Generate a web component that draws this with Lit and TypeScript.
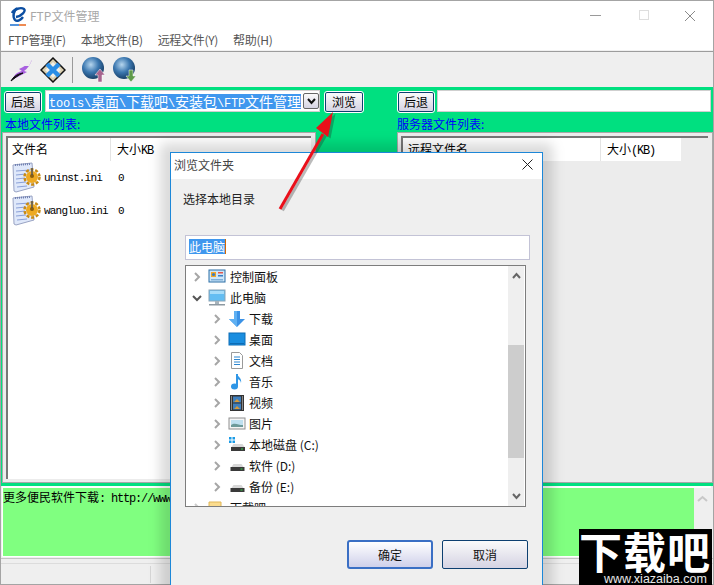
import { LitElement, html, css, svg } from "lit";
import { customElement } from "lit/decorators.js";

const chev = (open = false, light = false) =>
  html`<svg class="chev" width="10" height="10" viewBox="0 0 10 10"><path d=${open ? "M1 3l4 4 4-4" : "M3 1l4 4-4 4"} fill="none" stroke=${open ? "#555" : light ? "#ccc" : "#a6a6a6"} stroke-width="2"/></svg>`;

const icons: Record<string, any> = {
  panel: svg`<rect x="1" y="2" width="16" height="12" fill="#cfe6f8" stroke="#2b6ea6"/><rect x="3" y="4" width="5" height="5" fill="#f5a623"/><circle cx="5.5" cy="6.5" r="1.6" fill="#3a7fc4"/><rect x="10" y="4" width="5" height="1.5" fill="#e2574c"/><rect x="10" y="7" width="5" height="1.5" fill="#3a7fc4"/><rect x="3" y="11" width="12" height="1.5" fill="#7fb0da"/>`,
  pc: svg`<rect x="1" y="1" width="16" height="11" fill="#63bdf2" stroke="#8aa4b6"/><rect x="2" y="2" width="14" height="3" fill="#a6dcf9"/><rect x="7" y="12" width="4" height="3" fill="#a8b3bb"/><rect x="1" y="15" width="16" height="1.5" fill="#8d99a2"/>`,
  down: svg`<path d="M6 1h6v8h5l-8 8-8-8h5z" fill="#3b92e6"/><path d="M6 1h3v16l-8-8h5z" fill="#5fb0f2"/>`,
  desk: svg`<rect x="1" y="2" width="16" height="12" fill="#1a8ee0" stroke="#0d6cb5"/><rect x="2" y="12" width="14" height="1" fill="#0d6cb5"/>`,
  doc: svg`<path d="M3.500 .5h8l3 3v13h-11z" fill="#fff" stroke="#9a9a9a"/><path d="M6 5h6M6 7.500h6M6 10h6M6 12.500h6" stroke="#2f87d0" stroke-width="1"/>`,
  music: svg`<path d="M9 1v12" stroke="#2f96e6" stroke-width="2"/><ellipse cx="6.500" cy="13.500" rx="3.500" ry="3" fill="#2f96e6"/><path d="M9 1c1 3 5 4 4 9-.5-3-2.500-4-4-4z" fill="#2f96e6"/>`,
  video: svg`<rect x="2" y="1" width="14" height="16" fill="#333"/><rect x="5" y="2.500" width="8" height="6" fill="#3f7fbe"/><rect x="5" y="9.500" width="8" height="6" fill="#3f7fbe"/><path d="M6 8l3-3 3 3zM6 15l3-3 3 3z" fill="#d89a3a"/><path d="M3 3h1M3 5h1M3 7h1M3 9h1M3 11h1M3 13h1M3 15h1M14 3h1M14 5h1M14 7h1M14 9h1M14 11h1M14 13h1M14 15h1" stroke="#ddd"/>`,
  pic: svg`<rect x="1" y="3" width="16" height="11" fill="#f5f5f5" stroke="#8f8f8f"/><rect x="3" y="5" width="12" height="7" fill="#bfe0f0"/><path d="M3 10c4-3 7 0 12 0v2H3z" fill="#6d9a9a"/>`,
  c: svg`<path d="M1 1h2.500v2.500H1zM4.500 1H7v2.500H4.500zM1 4.500h2.500V7H1zM4.500 4.500H7V7H4.500z" fill="#1a9be6"/><path d="M3.500 11l2-3h9l2 3z" fill="#d8d8d8"/><rect x="3" y="11" width="14" height="4" fill="#3a3a3a"/><rect x="13" y="12.500" width="2" height="1" fill="#35d04a"/>`,
  d: svg`<path d="M3.500 10l2-3h8l2 3z" fill="#d8d8d8"/><rect x="2.500" y="10" width="14" height="4" fill="#3a3a3a"/><rect x="12.500" y="11.500" width="2" height="1" fill="#35d04a"/>`,
  folder: svg`<path d="M1 3h12v13H1z" fill="#fbdc8e" stroke="#e0b658"/>`,
};

const tree = [
  { t: "控制面板", i: "panel", d: 0 },
  { t: "此电脑", i: "pc", d: 0, open: true },
  { t: "下载", i: "down", d: 1 },
  { t: "桌面", i: "desk", d: 1 },
  { t: "文档", i: "doc", d: 1 },
  { t: "音乐", i: "music", d: 1 },
  { t: "视频", i: "video", d: 1 },
  { t: "图片", i: "pic", d: 1 },
  { t: "本地磁盘 (C:)", i: "c", d: 1 },
  { t: "软件 (D:)", i: "d", d: 1 },
  { t: "备份 (E:)", i: "d", d: 1 },
  { t: "下载吧", i: "folder", d: 0 },
];

const iniIcon = html`<svg class="ini" width="30" height="32" viewBox="0 0 30 32">
  <path d="M1 3l19-2 2 24-18 5-2-1z" fill="#dfe8fa" stroke="#9aa4c4"/>
  <path d="M4 9l14-1M4 13l10-1M4 17l9-1M4 21l10-1M5 25l10-1" stroke="#8aa0d8"/>
  <path d="M3 3l16-1" stroke="#6f7fb0" stroke-width="2" stroke-dasharray="1 1"/>
  <circle cx="20" cy="15" r="7.500" fill="none" stroke="#c98a12" stroke-width="2.500" stroke-dasharray="3 1.800"/>
  <circle cx="20" cy="15" r="6" fill="#eeaa22"/>
  <circle cx="20" cy="14" r="2" fill="#8a5e0c"/>
  <path d="M20 6v7" stroke="#555" stroke-width="1.500"/>
</svg>`;

@customElement("app-root")
export class AppRoot extends LitElement {
  static styles = css`
    :host { display: block; width: 714px; height: 585px; position: relative; overflow: hidden; background: #efefef; font-family: "Noto Sans CJK SC", sans-serif; color: #000; }
    .m { font-family: "Liberation Mono", monospace; font-size: 12px; letter-spacing: -1.2px; }
    .m7 { font-family: "Liberation Mono", monospace; font-size: 12px; letter-spacing: -.2px; }
    .win { width: 714px; height: 585px; box-sizing: border-box; display: flex; flex-direction: column; border: 1px solid #a4a4a4; }
    .title { height: 29px; background: #fff; display: flex; align-items: center; padding-left: 8px; flex: none; color: #a8a8a8; font-size: 12px; }
    .title span { margin-left: 3px; }
    .sp { flex: 1; }
    .wc { width: 46px; height: 29px; display: flex; align-items: center; justify-content: center; }
    .wc.mn { padding-right: 4px; box-sizing: border-box; }
    .menu { height: 21px; background: #fff; display: flex; gap: 15px; padding: 0 0 0 7px; font-size: 12px; letter-spacing: -.3px; color: #555; line-height: 20px; flex: none; border-bottom: 1px solid #9c9c9c; box-shadow: inset 0 -1px 0 #f0f0f0; }
    .tool { height: 35px; background: #efefef; display: flex; align-items: center; padding-left: 9px; flex: none; }
    .tool .sep { width: 1px; height: 26px; background: #9a9a9a; margin: 0 8px 0 6px; }
    .green { background: #00e080; height: 396px; flex: none; display: flex; flex-direction: column; }
    .bar { display: grid; grid-template-columns: 392px 1fr; height: 27px; padding-top: 3px; box-sizing: border-box; flex: none; }
    .bar > div { display: flex; align-items: flex-start; }
    .btn { box-sizing: border-box; height: 20px; margin-top: 2px; width: 36px; border: 1px solid #0d3f70; border-radius: 2px; background: linear-gradient(#fafafa, #d5d3e3); outline: 1px solid #fff; font-size: 12px; display: flex; align-items: center; justify-content: center; line-height: 1; }
    .left { padding-left: 4px; }
    .combo { margin-left: 4px; width: 275px; height: 22px; background: #fff; border: 1px solid #cfcfcf; box-sizing: border-box; display: flex; align-items: center; padding-left: 3px; }
    .sel { background: #3f97ee; color: #fff; font-size: 14px; line-height: 15px; height: 15px; white-space: nowrap; width: 252px; flex: none; display: block; }
    .dd { width: 16px; height: 16px; margin-left: 2px; background: linear-gradient(#fafafa, #d5d3e3); border: 1px solid #666; box-sizing: border-box; border-radius: 2px; display: flex; align-items: center; justify-content: center; flex: none; }
    .b2 { margin-left: 5px; width: 38px; }
    .right { padding-left: 5px; }
    .path { margin-left: 3px; width: 274px; height: 22px; background: #fff; border: 1px solid #cfcfcf; box-sizing: border-box; }
    .labels { display: grid; grid-template-columns: 392px 1fr; height: 18px; padding-top: 2px; box-sizing: border-box; color: #0000ff; font-size: 12px; line-height: 15px; flex: none; }
    .labels span { padding-left: 4px; }
    .lists { display: grid; grid-template-columns: 392px 1fr; flex: 1; min-height: 0; }
    .list { background: #ececec; border: 1px solid #a8a8a8; box-sizing: border-box; padding: 3px 4px 3px 3px; height: 351px; }
    .list.l { margin-left: 1px; width: 314px; }
    .list.r { width: 316px; margin-left: 4px; }
    .inner { border: 1px solid #777; border-width: 2px 0 0 2px; height: 100%; box-sizing: border-box; background: #fff; }
    .list.r .inner { background: #ececec; }
    .head { display: flex; height: 23px; font-size: 12px; line-height: 22px; background: #fff; width: max-content; }
    .h1 { padding-left: 4px; border-right: 1px solid #e4e4e4; box-sizing: border-box; }
    .h2 { padding-left: 6px; box-sizing: border-box; width: 80px; }
    .head.a .h1 { width: 103px; }
    .head.b .h1 { width: 198px; padding-left: 5px; }
    .row { display: flex; align-items: center; height: 33px; font-family: "Liberation Mono", monospace; font-size: 11px; letter-spacing: -.8px; background: #fff; }
    .row .ini { margin: 0 2px 0 4px; flex: none; }
    .row .nm { width: 74px; }
    .stripe { height: 3px; background: #00e080; flex: none; }
    .log { height: 71px; background: #80ff80; border: solid #fff; border-width: 2px 0 1px 1px; box-sizing: border-box; margin: 0 2px 0 1px; display: flex; font-size: 12px; flex: none; line-height: 18px; }
    .log .txt { flex: 1; white-space: nowrap; overflow: hidden; }
    .log .sb { width: 17px; background: #efefef; display: flex; justify-content: center; align-items: flex-start; padding-top: 7px; box-sizing: border-box; }
    .grip { height: 5px; flex: none; box-sizing: border-box; border-top: 1px solid #c4c4c4; margin-top: 1px; }
    .status { flex: 1; border-top: 1px solid #dcdcdc; background: #efefef; display: flex; }
    .status i { width: 149px; border-right: 1px solid #d6d6d6; margin: 2px 0 1px 0; }
    .shadow { position: absolute; left: 160px; top: 143px; width: 393px; height: 460px; background: rgba(0,0,0,.14); filter: blur(6px); border-radius: 6px; }
    .dlg { position: absolute; left: 170px; top: 152px; width: 373px; height: 440px; box-sizing: border-box; border: 1px solid #1c87d8; background: #efefef; display: flex; flex-direction: column; }
    .dt { height: 26px; box-sizing: border-box; padding: 0 0 4px 3px; background: #fff; display: flex; align-items: center; font-size: 12px; color: #444; flex: none; }
    .dt .xx { margin-left: auto; margin-right: 9px; display: flex; }
    .dp { font-size: 12px; line-height: 18px; margin: 11px 0 0 12px; color: #222; flex: none; }
    .inp { margin: 27px 12px 0 14px; height: 25px; box-sizing: border-box; border: 1px solid #c3c3d6; background: #fff; display: flex; align-items: center; padding: 0 0 2px 3px; font-size: 12px; flex: none; }
    .inp span { background: #3f97ee; color: #fff; border-right: 1px solid #d36a00; line-height: 15px; }
    .tree { margin: 5px 16px 0 14px; height: 242px; box-sizing: border-box; border: 1px solid #7d7d7d; background: #fff; display: flex; flex: none; overflow: hidden; }
    .rows { flex: 1; overflow: hidden; }
    .tr { height: 21px; display: flex; align-items: center; font-size: 12px; line-height: 18px; color: #111; white-space: nowrap; }
    .tr .chev { margin-left: 6px; flex: none; }
    .tr.d1 .chev { margin-left: 26px; }
    .tr svg.ic { margin-left: 6px; margin-right: 4px; flex: none; }
    .tr.d1 svg.ic { margin-right: 3px; }
    .sbar { width: 16px; background: #efefef; display: flex; flex-direction: column; margin-right: 1px; }
    .sbar .a { height: 19px; display: flex; align-items: center; justify-content: center; flex: none; }
    .sbar .gap1 { height: 60px; flex: none; }
    .sbar .th { height: 113px; background: #cdcdcd; flex: none; }
    .sbar .gap2 { flex: 1; }
    .dbtns { display: flex; gap: 9px; margin: 33px 0 0 176px; flex: none; }
    .dbtn { width: 86px; height: 29px; box-sizing: border-box; border: 1px solid #0d3f70; border-radius: 2px; background: linear-gradient(#fafafa, #d5d3e3); display: flex; align-items: center; justify-content: center; font-size: 12px; color: #111; }
    .dbtn.p { border: 2px solid #3a6fc4; border-radius: 3px; background: linear-gradient(#fff, #cfd0ea); }
    .arrow { position: absolute; left: 270px; top: 105px; }
    .wm { position: absolute; left: 579px; top: 529px; width: 133px; height: 56px; background: #000; color: #fff; overflow: hidden; }
    .wm b { display: block; font-size: 43px; line-height: 43px; font-weight: 700; letter-spacing: 1px; white-space: nowrap; }
    .wm small { position: absolute; left: 25px; bottom: 0; font: 12.500px/12px "Liberation Sans", sans-serif; color: #e8e8e8; white-space: nowrap; }
  `;

  render() {
    return html`
      <div class="win">
        <div class="title">
          <svg width="18" height="22" viewBox="0 0 18 22"><path d="M3 8c2-4 9-6 12-4 2 2-2 7-8 8" fill="none" stroke="#0b4ea2" stroke-width="2.400"/><path d="M8 3C5 6 3 11 6 15c2 2 6 0 8-3" fill="none" stroke="#0b4ea2" stroke-width="2.400"/><path d="M1 20h9" stroke="#1a6fd0" stroke-width="1.500"/><path d="M10 20h7" stroke="#e8651a" stroke-width="1.500"/></svg>
          <span>FTP文件管理</span>
          <div class="sp"></div>
          <div class="wc mn"><svg width="12" height="2"><rect width="11" height="1" fill="#9a9a9a"/></svg></div>
          <div class="wc"><svg width="11" height="11"><rect x=".5" y=".5" width="9" height="9" fill="none" stroke="#dedede"/></svg></div>
          <div class="wc"><svg width="12" height="12"><path d="M1 1l10 10M11 1L1 11" stroke="#8a8a8a"/></svg></div>
        </div>
        <div class="menu"><span>FTP管理(F)</span><span>本地文件(B)</span><span>远程文件(Y)</span><span>帮助(H)</span></div>
        <div class="tool">
          <svg width="24" height="24" viewBox="0 0 24 24"><path d="M2 22c2-5 5-8 10-9l-3-2c5-2 9-5 13-9-2 5-5 9-8 11l3 1c-5 3-10 5-15 8z" fill="#a860e0"/><path d="M1 23c2-4 6-7 12-8-5 2-8 5-12 8z" fill="#111" stroke="#111"/><path d="M13 8l9-6-3 6z" fill="#eeeeee"/></svg>
          <svg width="26" height="26" viewBox="0 0 26 26" style="margin-left:6px"><path d="M13 1l12 12-12 12L1 13z" fill="#d8ceb0" stroke="#111" stroke-width="1.500"/><path d="M13 5l8 8-8 8-8-8z" fill="#f2f0e8"/><path d="M7 7l12 12M19 7L7 19" stroke="#2a8ee6" stroke-width="4.500"/></svg>
          <div class="sep"></div>
          <svg width="26" height="28" viewBox="0 0 26 28"><defs><radialGradient id="g" cx=".4" cy=".35" r=".7"><stop offset="0" stop-color="#b6d6ee"/><stop offset=".5" stop-color="#3c78b0"/><stop offset="1" stop-color="#12375e"/></radialGradient></defs><circle cx="12" cy="12" r="11" fill="url(#g)"/><path d="M19 13l5 6h-3v7h-4v-7h-3z" fill="#a6648e" stroke="#fff" stroke-width=".5"/></svg>
          <svg width="26" height="28" viewBox="0 0 26 28" style="margin-left:5px"><circle cx="12" cy="12" r="11" fill="url(#g)"/><path d="M17 14h4v6h3l-5 6-5-6h3z" fill="#5f9a4a" stroke="#fff" stroke-width=".5"/></svg>
        </div>
        <div class="green">
          <div class="bar">
            <div class="left">
              <div class="btn">后退</div>
              <div class="combo"><span class="sel"><span class="m7">tools\\</span>桌面<span class="m7">\\</span>下载吧<span class="m7">\\</span>安装包<span class="m7">\\FTP</span>文件管理</span><span class="dd"><svg width="9" height="7"><path d="M1 1l3.500 4L8 1" fill="none" stroke="#111" stroke-width="2"/></svg></span></div>
              <div class="btn b2">浏览</div>
            </div>
            <div class="right">
              <div class="btn">后退</div>
              <div class="path"></div>
            </div>
          </div>
          <div class="labels"><span>本地文件列表:</span><span>服务器文件列表:</span></div>
          <div class="lists">
            <div class="list l"><div class="inner">
              <div class="head a"><div class="h1">文件名</div><div class="h2">大小<span class="m">KB</span></div></div>
              <div class="row">${iniIcon}<span class="nm">uninst.ini</span><span>0</span></div>
              <div class="row">${iniIcon}<span class="nm">wangluo.ini</span><span>0</span></div>
            </div></div>
            <div class="list r"><div class="inner">
              <div class="head b"><div class="h1">远程文件名</div><div class="h2">大小<span class="m">(KB)</span></div></div>
            </div></div>
          </div>
        </div>
        <div class="stripe"></div>
        <div class="log"><div class="txt">更多便民软件下载<span class="m">: http://www.xiazaiba.com</span></div><div class="sb"><svg width="11" height="7"><path d="M1 6l4.500-4L10 6" fill="none" stroke="#c8c8c8" stroke-width="2"/></svg></div></div>
        <div class="grip"></div>
        <div class="status"><i></i></div>
      </div>
      <div class="shadow"></div>
      <div class="dlg">
        <div class="dt">浏览文件夹<span class="xx"><svg width="11" height="11"><path d="M.5 .5l10 10M10.500 .5l-10 10" stroke="#222"/></svg></span></div>
        <div class="dp">选择本地目录</div>
        <div class="inp"><span>此电脑</span></div>
        <div class="tree">
          <div class="rows">
            ${tree.map(
              (r) => html`<div class="tr ${r.d ? "d1" : ""}">${chev(!!r.open, r.i === "folder")}<svg class="ic" width="18" height="18" viewBox="0 0 18 18">${icons[r.i]}</svg><span>${r.t}</span></div>`
            )}
          </div>
          <div class="sbar">
            <div class="a"><svg width="9" height="7"><path d="M1 6l3.500-4L8 6" fill="none" stroke="#666" stroke-width="2"/></svg></div>
            <div class="gap1"></div><div class="th"></div><div class="gap2"></div>
            <div class="a"><svg width="9" height="7"><path d="M1 1l3.500 4L8 1" fill="none" stroke="#666" stroke-width="2"/></svg></div>
          </div>
        </div>
        <div class="dbtns"><div class="dbtn p">确定</div><div class="dbtn">取消</div></div>
      </div>
      <svg class="arrow" width="75" height="110" viewBox="0 0 75 110">
        <g transform="translate(2.500 1.500)" opacity=".3" fill="#222" stroke="#222"><path d="M10 104L53 29" stroke-width="3" fill="none"/><path d="M63 7L46 23l12 9z" stroke="none"/></g>
        <path d="M10 104L53 29" stroke="#ea0f1a" stroke-width="3"/>
        <path d="M63 7L46 23l12 9z" fill="#ea0f1a"/>
      </svg>
      <div class="wm"><b>下载吧</b><small>www.xiazaiba.com</small></div>
    `;
  }
}
